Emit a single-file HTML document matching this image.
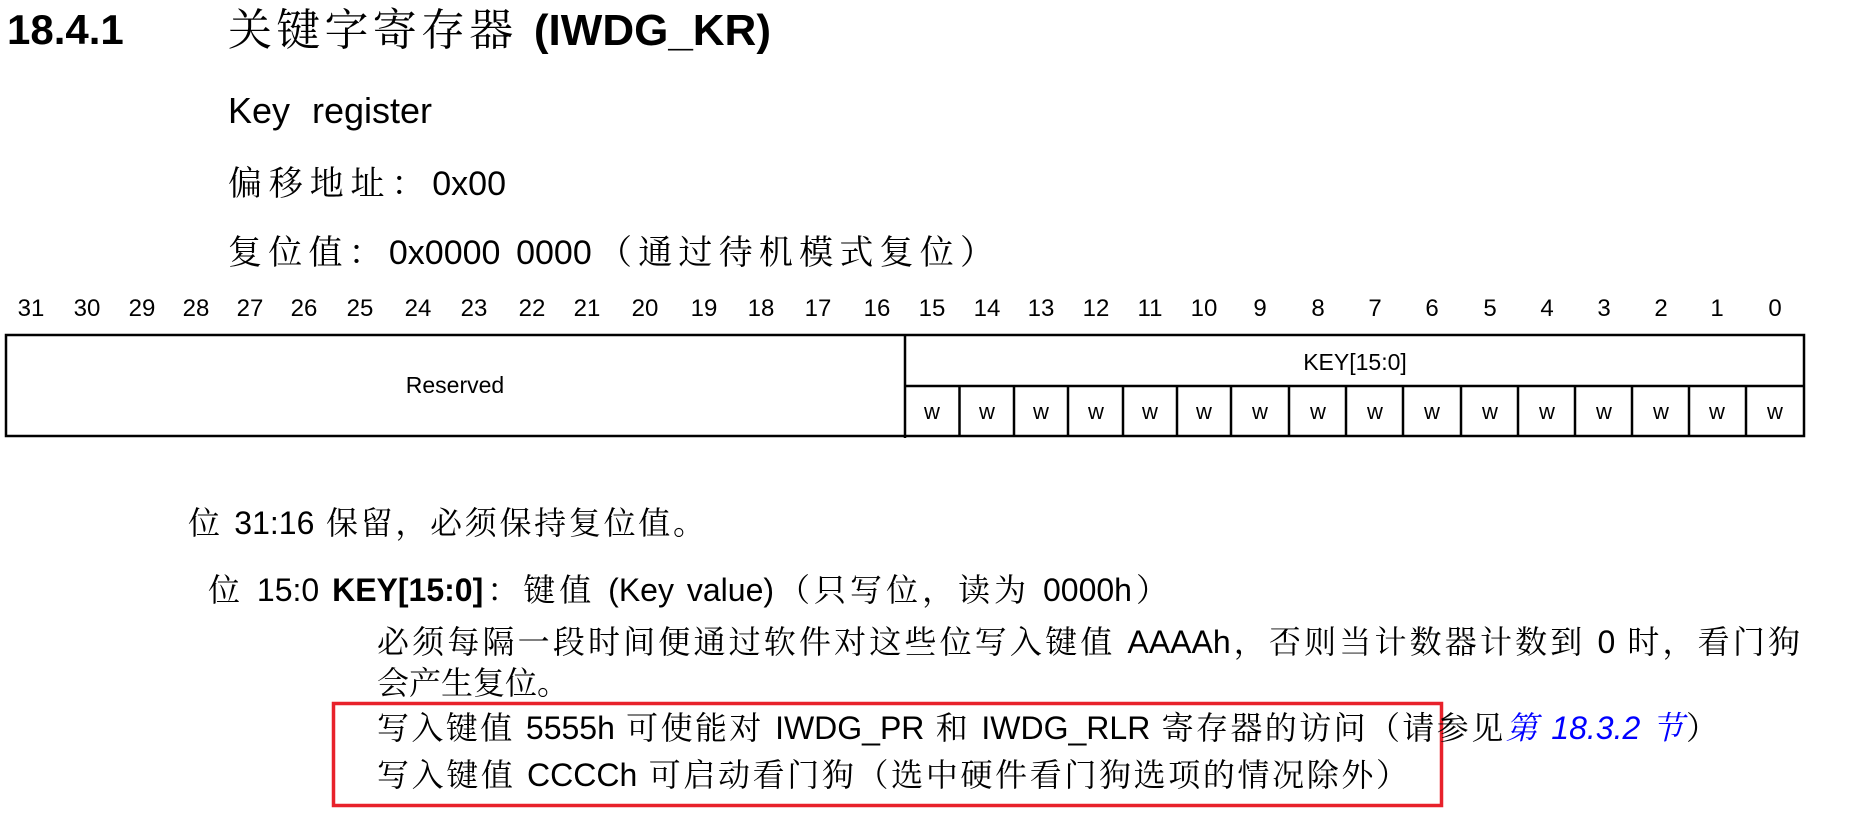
<!DOCTYPE html>
<html><head><meta charset="utf-8">
<style>
html,body{margin:0;padding:0;background:#fff;}
body{width:1861px;height:821px;position:relative;overflow:hidden;font-family:"Liberation Sans","Noto Serif CJK SC",serif;color:#000;}
.a{position:absolute;white-space:nowrap;}
.j{position:absolute;text-align:justify;text-align-last:justify;height:40px;line-height:40px;overflow:visible;}
.n{position:absolute;top:296px;width:40px;margin-left:-20px;text-align:center;font-size:24px;line-height:26px;}
.w{position:absolute;top:399px;width:40px;margin-left:-20px;text-align:center;font-size:22px;line-height:26px;}
b{font-weight:bold;}
</style></head><body>
<div class="a" style="left:7px;top:7px;font-size:42px;line-height:46px;font-weight:bold;">18.4.1</div>
<div class="j" style="left:228px;width:543px;top:6px;font-size:44px;line-height:50px;height:50px;">关键字寄存器 <b>(IWDG_KR)</b></div>
<div class="j" style="left:228px;width:204px;top:91px;font-size:36px;">Key register</div>
<div class="j" style="left:228px;width:278px;top:164px;font-size:34px;">偏移地址：0x00</div>
<div class="j" style="left:228px;width:766px;top:233px;font-size:34px;">复位值：0x0000 0000（通过待机模式复位）</div>

<div class="n" style="left:31px">31</div><div class="n" style="left:87px">30</div><div class="n" style="left:142px">29</div><div class="n" style="left:196px">28</div><div class="n" style="left:250px">27</div><div class="n" style="left:304px">26</div><div class="n" style="left:360px">25</div><div class="n" style="left:418px">24</div><div class="n" style="left:474px">23</div><div class="n" style="left:532px">22</div><div class="n" style="left:587px">21</div><div class="n" style="left:645px">20</div><div class="n" style="left:704px">19</div><div class="n" style="left:761px">18</div><div class="n" style="left:818px">17</div><div class="n" style="left:877px">16</div>
<div class="n" style="left:932px">15</div><div class="n" style="left:987px">14</div><div class="n" style="left:1041px">13</div><div class="n" style="left:1096px">12</div><div class="n" style="left:1150px">11</div><div class="n" style="left:1204px">10</div><div class="n" style="left:1260px">9</div><div class="n" style="left:1318px">8</div><div class="n" style="left:1375px">7</div><div class="n" style="left:1432px">6</div><div class="n" style="left:1490px">5</div><div class="n" style="left:1547px">4</div><div class="n" style="left:1604px">3</div><div class="n" style="left:1661px">2</div><div class="n" style="left:1717px">1</div><div class="n" style="left:1775px">0</div>

<svg class="a" style="left:0;top:0" width="1861" height="821">
<g stroke="#000" stroke-width="2.5" fill="none">
<rect x="6" y="335" width="1798" height="101"/>
<line x1="905" y1="335" x2="905" y2="438"/>
<line x1="905" y1="386" x2="1804" y2="386"/>
<line x1="959.5" y1="386" x2="959.5" y2="436"/><line x1="1014" y1="386" x2="1014" y2="436"/><line x1="1068" y1="386" x2="1068" y2="436"/><line x1="1123" y1="386" x2="1123" y2="436"/><line x1="1177" y1="386" x2="1177" y2="436"/><line x1="1231" y1="386" x2="1231" y2="436"/><line x1="1289" y1="386" x2="1289" y2="436"/><line x1="1346" y1="386" x2="1346" y2="436"/><line x1="1403" y1="386" x2="1403" y2="436"/><line x1="1461" y1="386" x2="1461" y2="436"/><line x1="1518" y1="386" x2="1518" y2="436"/><line x1="1575" y1="386" x2="1575" y2="436"/><line x1="1632" y1="386" x2="1632" y2="436"/><line x1="1689" y1="386" x2="1689" y2="436"/><line x1="1746" y1="386" x2="1746" y2="436"/>
</g>
<rect x="333.5" y="703.5" width="1108" height="102" stroke="#e8212b" stroke-width="3.5" fill="none"/>
</svg>
<div class="a" style="left:355px;width:200px;text-align:center;top:372px;font-size:23px;line-height:26px;">Reserved</div>
<div class="a" style="left:1255px;width:200px;text-align:center;top:349px;font-size:23px;line-height:26px;">KEY[15:0]</div>
<div class="w" style="left:932px">w</div><div class="w" style="left:987px">w</div><div class="w" style="left:1041px">w</div><div class="w" style="left:1096px">w</div><div class="w" style="left:1150px">w</div><div class="w" style="left:1204px">w</div><div class="w" style="left:1260px">w</div><div class="w" style="left:1318px">w</div><div class="w" style="left:1375px">w</div><div class="w" style="left:1432px">w</div><div class="w" style="left:1490px">w</div><div class="w" style="left:1547px">w</div><div class="w" style="left:1604px">w</div><div class="w" style="left:1661px">w</div><div class="w" style="left:1717px">w</div><div class="w" style="left:1775px">w</div>

<div class="j" style="left:188px;width:517px;top:503px;font-size:32px;">位 31:16 保留，必须保持复位值。</div>
<div class="j" style="left:208px;width:960px;top:570px;font-size:32px;">位 15:0 <b>KEY[15:0]</b>：键值 (Key value)（只写位，读为 0000h）</div>
<div class="j" style="left:377px;width:1423px;top:622px;font-size:32px;">必须每隔一段时间便通过软件对这些位写入键值 AAAAh，否则当计数器计数到 0 时，看门狗</div>
<div class="j" style="left:377px;width:192px;top:663px;font-size:32px;">会产生复位。</div>
<div class="j" style="left:377px;width:1341px;top:708px;font-size:32px;">写入键值 5555h 可使能对 IWDG_PR 和 IWDG_RLR 寄存器的访问（请参见<i style="color:#0000ff">第 18.3.2 节</i>）</div>
<div class="j" style="left:377px;width:1031px;top:755px;font-size:32px;">写入键值 CCCCh 可启动看门狗（选中硬件看门狗选项的情况除外）</div>
</body></html>
